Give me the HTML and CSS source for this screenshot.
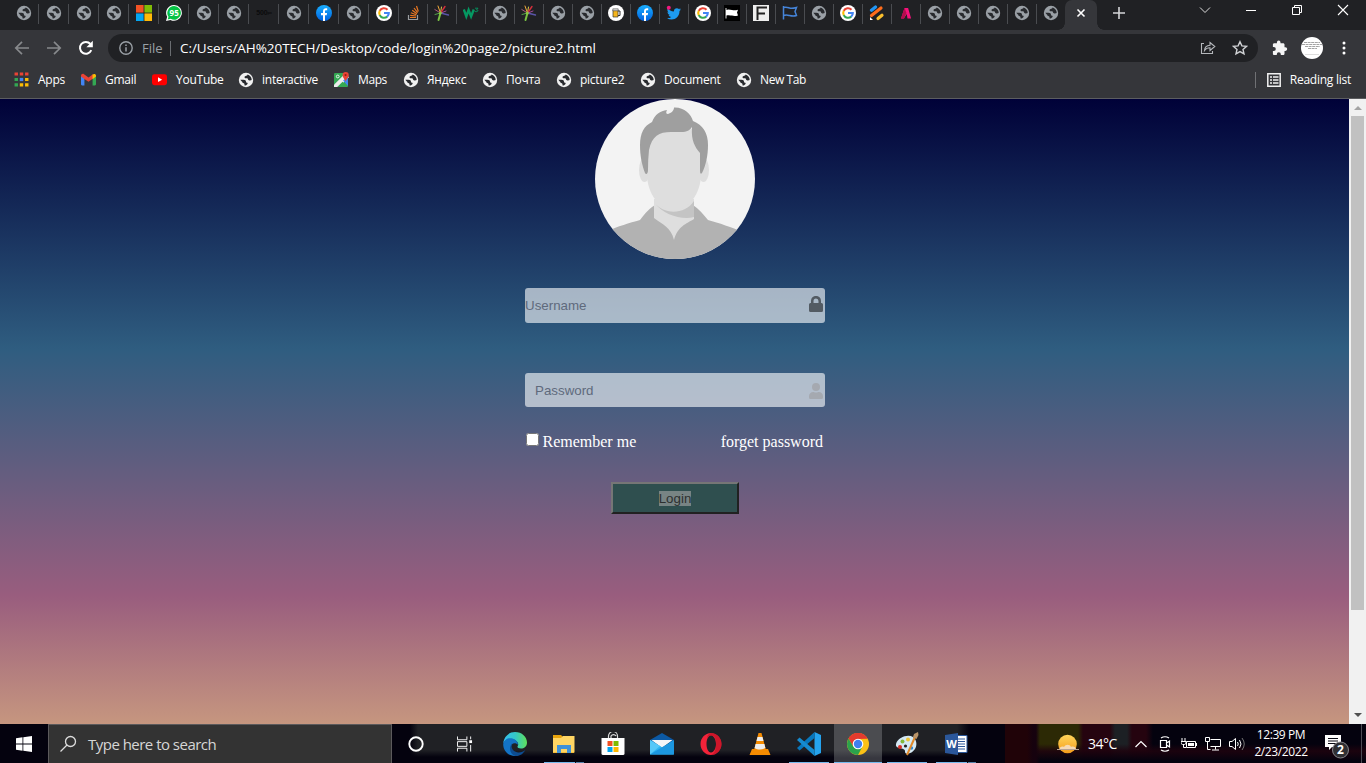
FILE: index.html
```html
<!DOCTYPE html>
<html lang="en">
<head>
<meta charset="utf-8">
<title>picture2</title>
<link rel="stylesheet" href="styles.css">
</head>
<body>
<svg class="defs" aria-hidden="true">
  <defs>
    <linearGradient id="gEdge" x1="0" y1="0" x2="1" y2="0"><stop offset="0" stop-color="#35c1f1"/><stop offset=".5" stop-color="#34c6c8"/><stop offset="1" stop-color="#5fe05a"/></linearGradient>
    <linearGradient id="gFb" x1="0" y1="0" x2="0" y2="1"><stop offset="0" stop-color="#19afff"/><stop offset="1" stop-color="#0062e0"/></linearGradient>
    <linearGradient id="gSun" x1="0" y1="0" x2="0" y2="1"><stop offset="0" stop-color="#ffd55a"/><stop offset="1" stop-color="#f59d1c"/></linearGradient>
    <symbol id="globe" viewBox="0 0 16 16"><circle cx="8" cy="8" r="7.200" fill="currentColor"/><path class="land" d="M2.300 7.800H5.500C7.300 7.800 8 8.600 8 9.700C8 10.500 8.700 10.600 9.300 10.800C9.900 11 9.700 11.700 9.300 12.200C8.700 13 7.600 13.500 6.600 13.500L6.400 12C6.200 11.300 5.600 11.300 5 11C4.300 10.600 4.500 9.900 3.800 9.500zM9.500 2.500C9.400 3.500 8.600 3.900 7.600 4C6.800 4.100 6.400 4.700 6.600 5.500C6.800 6.200 7.500 6.300 8.500 6.300C9.600 6.300 9.900 6.800 10.100 7.600C10.300 8.400 11 8.500 12 8.400L13.700 8C13.800 5.300 11.800 3.200 9.500 2.500z"/></symbol>
    <symbol id="google" viewBox="0 0 16 16"><circle cx="8" cy="8" r="8" fill="#fff"/><g fill="none" stroke-width="2.100"><path d="M11.500 4.700A4.800 4.800 0 0 0 3.700 5.900" stroke="#ea4335"/><path d="M3.800 5.700a4.800 4.800 0 0 0 0 4.600" stroke="#fbbc05"/><path d="M3.700 10.100a4.800 4.800 0 0 0 7.500 1.500" stroke="#34a853"/><path d="M8 8h4.800a4.800 4.800 0 0 1-1.700 3.700" stroke="#4285f4"/></g></symbol>
    <symbol id="fb" viewBox="0 0 16 16"><circle cx="8" cy="8" r="8" fill="url(#gFb)"/><path d="M7 16v-5.700H5V8h2V6.300C7 4.200 8.200 3.200 9.900 3.200c.7 0 1.300.1 1.300.1v2H10c-.8 0-1 .5-1 1V8h2.100l-.4 2.300H9V16z" fill="#fff"/></symbol>
    <symbol id="splash" viewBox="0 0 16 16"><g fill="none" stroke-linecap="round"><path d="M6.500 8L4 1" stroke="#f2a93b"/><path d="M6.500 8L.8 4.500" stroke="#ac5a80"/><path d="M6.500 8L7.500 2" stroke="#d8c848"/><path d="M6.500 8L11 1.500" stroke="#d52f3c" stroke-width="1.400"/><path d="M6.500 8L1 9.500" stroke="#54a548"/><path d="M6.500 8l-2 7" stroke="#7ac143" stroke-width="2"/><path d="M6.500 8l8 2" stroke="#5a55a8" stroke-width="1.300"/><path d="M7 8l5-2" stroke="#a54b9a"/></g><circle cx="6.300" cy="8" r="1.500" fill="#8cc63f"/></symbol>
  </defs>
</svg>

<div class="screen">
  <header class="tabstrip">
    <div class="tab"><svg class="fav"><use href="#globe"/></svg></div>
    <div class="tab"><svg class="fav"><use href="#globe"/></svg></div>
    <div class="tab"><svg class="fav"><use href="#globe"/></svg></div>
    <div class="tab"><svg class="fav"><use href="#globe"/></svg></div>
    <div class="tab"><svg class="fav" viewBox="0 0 16 16"><path d="M0 0h7.600v7.600H0z" fill="#f35325"/><path d="M8.400 0H16v7.600H8.400z" fill="#81bc06"/><path d="M0 8.400h7.600V16H0z" fill="#05a6f0"/><path d="M8.400 8.400H16V16H8.400z" fill="#ffba08"/></svg></div>
    <div class="tab"><svg class="fav" viewBox="0 0 16 16"><path d="M8.200 0a7.900 7.900 0 1 1-3.700 15L0 16l1.200-4.200A7.900 7.900 0 0 1 8.200 0z" fill="#fff"/><path d="M8.200 1.100a6.800 6.800 0 1 1-3.500 12.700l-3 .8.800-2.900A6.800 6.800 0 0 1 8.200 1.100z" fill="#06c244"/><text x="8.200" y="10.800" class="wa-count">95</text></svg></div>
    <div class="tab"><svg class="fav"><use href="#globe"/></svg></div>
    <div class="tab"><svg class="fav"><use href="#globe"/></svg></div>
    <div class="tab"><span class="px500">500<small>px</small></span></div>
    <div class="tab"><svg class="fav"><use href="#globe"/></svg></div>
    <div class="tab"><svg class="fav"><use href="#fb"/></svg></div>
    <div class="tab"><svg class="fav"><use href="#globe"/></svg></div>
    <div class="tab"><svg class="fav"><use href="#google"/></svg></div>
    <div class="tab narrow"><svg class="fav" viewBox="0 0 16 16" fill="none"><path d="M3.500 10v4.500h9V10" stroke="#9a9da0" stroke-width="1.200"/><path d="M5 12.500h6M5.200 10.300l5.900.7M5.800 7.800l5.600 1.900M7.200 5.300l4.800 3.400M9 3l3.600 4.700M11.500 1l1.800 5.500" stroke="#e87722" stroke-width="1.200"/></svg></div>
    <div class="tab narrow"><svg class="fav"><use href="#splash"/></svg></div>
    <div class="tab narrow"><svg class="fav" viewBox="0 0 16 16" fill="none" stroke="#059862"><path d="M.8 4.500l2.500 7L5.600 5l2.500 6.500 2.700-7" stroke-width="2.400"/><path d="M12 3.200h3l-1.500 1.700c2.500 0 1.500 2.500-1.700 1.600" stroke-width=".9"/></svg></div>
    <div class="tab narrow"><svg class="fav"><use href="#globe"/></svg></div>
    <div class="tab narrow"><svg class="fav"><use href="#splash"/></svg></div>
    <div class="tab narrow"><svg class="fav"><use href="#globe"/></svg></div>
    <div class="tab narrow"><svg class="fav"><use href="#globe"/></svg></div>
    <div class="tab narrow"><svg class="fav" viewBox="0 0 16 16"><circle cx="8" cy="8" r="8" fill="#fff"/><path d="M10 6h2v4.500h-2" fill="none" stroke="#333"/><path d="M5 5h5v7H5z" fill="#f5b51c" stroke="#333" stroke-width=".7"/><path d="M4.800 3.800h5.400v2H4.800z" fill="#ddd" stroke="#333" stroke-width=".5"/></svg></div>
    <div class="tab narrow"><svg class="fav"><use href="#fb"/></svg></div>
    <div class="tab narrow"><svg class="fav" viewBox="0 0 16 16"><path d="M15 4.200c-.5.300-1 .4-1.500.5.500-.3.900-.8 1.100-1.400-.5.300-1.100.5-1.700.7a3 3 0 0 0-5 2.500C5.200 6.400 3.200 5.200 1.800 3.500c-.8 1.500-.3 3.200 1 4-.5 0-1-.2-1.300-.4 0 1.500 1 2.600 2.300 2.900-.4.100-.9.100-1.200 0 .4 1.200 1.400 1.900 2.700 2C4 12.800 2.700 13.300 1 13.200c5.500 3.300 12.500.2 12.500-7.200.6-.4 1.100-1 1.500-1.800z" fill="#1d9bf0"/><circle cx="2.800" cy="2.800" r="2" fill="#f5187e"/></svg></div>
    <div class="tab narrow"><svg class="fav"><use href="#google"/></svg></div>
    <div class="tab narrow"><svg class="fav" viewBox="0 0 16 16"><rect width="16" height="16" fill="#000"/><path d="M2 3v10.500" stroke="#ddd"/><path d="M2 5c2.500-1.200 4-.3 6 0s3.500.3 6-.3l-1 2.700 1 3c-2.500.8-4.500.5-6 .2s-3.500-.8-6 0z" fill="#fff"/></svg></div>
    <div class="tab narrow"><svg class="fav" viewBox="0 0 16 16"><rect width="16" height="16" fill="#eee"/><path d="M4.500 15V2.500H14M4.500 8.500H12" fill="none" stroke="#222" stroke-width="2"/></svg></div>
    <div class="tab narrow"><svg class="fav" viewBox="0 0 16 16" fill="none" stroke="#4584d8" stroke-width="1.500"><path d="M1.500 1v13.500M1.500 2.500c3-1 4.500 0 6 .5s3.500.5 7-.5l-1.500 4 1.500 4c-3 1-5 .5-7 0s-3.500-1-6 0"/></svg></div>
    <div class="tab narrow"><svg class="fav"><use href="#globe"/></svg></div>
    <div class="tab narrow"><svg class="fav"><use href="#google"/></svg></div>
    <div class="tab narrow"><svg class="fav" viewBox="0 0 16 16" stroke-width="3.200" stroke-linecap="round"><path d="M2.500 5.300l4-3.300" stroke="#2196f3"/><path d="M2.500 10.500L12 3" stroke="#ff6d1c"/><path d="M9 13.500l4-3.300" stroke="#fbc02d"/><path d="M1 12v3h3z" stroke="none" fill="#fff"/></svg></div>
    <div class="tab narrow"><svg class="fav" viewBox="0 0 16 16"><path d="M6.500 3h3.600l3 10.500H9.500L8.700 9 6 13.500H3z" fill="#f5127b"/><path d="M6.500 3L3 13.500h3L8.500 8z" fill="#b30c4c"/></svg></div>
    <div class="tab narrow"><svg class="fav"><use href="#globe"/></svg></div>
    <div class="tab narrow"><svg class="fav"><use href="#globe"/></svg></div>
    <div class="tab narrow"><svg class="fav"><use href="#globe"/></svg></div>
    <div class="tab narrow"><svg class="fav"><use href="#globe"/></svg></div>
    <div class="tab narrow last"><svg class="fav"><use href="#globe"/></svg></div>
    <div class="tab-active"><svg width="10" height="10" viewBox="0 0 10 10"><path d="M1.500 1.500l7 7M8.500 1.500l-7 7" stroke="#fff" stroke-width="1.600"/></svg></div>
    <svg class="new-tab" viewBox="0 0 12 12"><path d="M6 0v12M0 6h12" stroke="#d4d5d7" stroke-width="1.600"/></svg>
    <div class="win-controls">
      <svg width="12" height="20" viewBox="0 0 12 20"><path d="M1 7.500l5 5 5-5" fill="none" stroke="#ddd"/></svg>
      <svg width="12" height="20" viewBox="0 0 12 20"><path d="M1 10.500h10" stroke="#fff"/></svg>
      <svg width="12" height="20" viewBox="0 0 12 20"><path d="M1.500 7.500h7v7h-7zM3.500 7.500v-2h7v7h-2" fill="none" stroke="#fff"/></svg>
      <svg width="12" height="20" viewBox="0 0 12 20"><path d="M1 5l10 10M11 5L1 15" stroke="#fff" stroke-width="1.100"/></svg>
    </div>
  </header>

  <div class="toolbar">
    <svg class="nav" viewBox="0 0 16 16"><path d="M15 8H2M8 1.800L1.800 8 8 14.200" fill="none" stroke="#87898c" stroke-width="1.700"/></svg>
    <svg class="nav" viewBox="0 0 16 16"><path d="M1 8h13M8 1.800L14.200 8 8 14.200" fill="none" stroke="#87898c" stroke-width="1.700"/></svg>
    <svg class="nav" viewBox="0 0 16 16"><path d="M13.300 10.200A5.900 5.900 0 1 1 12.400 4" fill="none" stroke="#fff" stroke-width="2"/><path d="M14.800.8v6.400H8.400z" fill="#fff"/></svg>
    <div class="omnibox">
      <svg class="info" viewBox="0 0 14 14"><circle cx="7" cy="7" r="6.200" fill="none" stroke="#9aa0a6" stroke-width="1.400"/><path d="M7 6.200v4.300M7 3.500v1.600" stroke="#9aa0a6" stroke-width="1.500"/></svg>
      <span class="scheme">File</span>
      <span class="url">C:/Users/AH%20TECH/Desktop/code/login%20page2/picture2.html</span>
      <svg class="share" viewBox="0 0 16 16"><path d="M4 3.500H1.500v10h11V11M4.500 10.500c.3-3.500 2.300-5 5.500-5.200V2.500l4.800 4-4.800 4V7.800c-2.500 0-4.200.8-5.500 2.700z" fill="none" stroke="#b5b8bc" stroke-width="1.100"/></svg>
      <svg class="star" viewBox="0 0 16 16"><path d="M8 1.700l1.900 4.200 4.500.5-3.400 3 1 4.500L8 11.600l-4 2.300 1-4.500-3.400-3 4.500-.5z" fill="none" stroke="#d0d2d5" stroke-width="1.400"/></svg>
    </div>
    <svg class="puzzle" viewBox="0 0 16 16"><path d="M13.400 7.300h-.9V4.600c0-.8-.6-1.400-1.400-1.400H8.500V2.400a1.800 1.800 0 0 0-3.600 0v.8H2.300C1.500 3.200.9 3.800.9 4.600v2.500h.9a2 2 0 0 1 0 4H.9v2.600c0 .8.600 1.400 1.400 1.400h2.500v-.9a2 2 0 0 1 4 0v.9h2.300c.8 0 1.400-.6 1.400-1.400v-2.800h.9a1.800 1.800 0 0 0 0-3.600z" fill="#f5f5f5"/></svg>
    <svg class="profile" viewBox="0 0 22 22"><circle cx="11" cy="11" r="11" fill="#fff"/><path d="M3 5.500h16M1 7.500h20M4 9.500h15M7 11.500h9" stroke="#999" stroke-width=".9" stroke-dasharray="3 .6"/><path d="M4 17.500h14" stroke="#ddd"/></svg>
    <svg class="dots" viewBox="0 0 4 14"><circle cx="2" cy="2" r="1.500"/><circle cx="2" cy="7" r="1.500"/><circle cx="2" cy="12" r="1.500"/></svg>
  </div>

  <nav class="bookmarks">
    <a class="bm bm-apps"><svg viewBox="0 0 14 14"><path d="M.5.500h3.200v2.700H.5zM5.400.500h3.200v2.700H5.400zM10.300.500h3.200v2.700h-3.200z" fill="#ea4335"/><path d="M.5 5.500h3.200v3H.5zM.5 10.500h3.200v3H.5z" fill="#34a853"/><path d="M5.400 5.500h3.200v3H5.400z" fill="#4285f4"/><path d="M10.300 5.500h3.200v3h-3.200zM5.400 10.500h3.200v3H5.400zM10.300 10.500h3.200v3h-3.200z" fill="#fbbc05"/></svg><span>Apps</span></a>
    <a class="bm bm-gmail"><svg viewBox="0 0 14 14"><path d="M0 3.500L3.200 6v6.500H1A1 1 0 0 1 0 11.500z" fill="#4285f4"/><path d="M10.800 6L14 3.500v8a1 1 0 0 1-1 1h-2.200z" fill="#34a853"/><path d="M0 3.500C0 1.700 1.700 1.200 2.800 2L7 5.200 11.200 2v4L7 9.200 3.200 6.500 0 4.200z" fill="#ea4335"/><path d="M10.800 2.300c1.400-1 3.200-.5 3.200 1.200v.7l-3.200 2.500z" fill="#fbbc05"/></svg><span>Gmail</span></a>
    <a class="bm bm-youtube"><svg viewBox="0 0 14 14"><rect y="2" width="14" height="10.300" rx="2.200" fill="#f00"/><path d="M5.600 5v4.400L9.500 7.200z" fill="#fff"/></svg><span>YouTube</span></a>
    <a class="bm bm-interactive"><svg class="light"><use href="#globe"/></svg><span>interactive</span></a>
    <a class="bm bm-maps"><svg viewBox="0 0 14 14"><rect y="1" width="13" height="13" rx="1" fill="#34a853"/><path d="M0 12L10.500 1.500 14 5 4.500 14H0z" fill="#ececec"/><path d="M3 14l5-5 5 5z" fill="#34a853"/><path d="M8.500 8L13 4v9z" fill="#4285f4"/><path d="M10.800 9C10 6 8 5.300 8 3a2.900 2.900 0 0 1 5.800 0c0 2.300-2.200 3-3 6z" fill="#ea4335"/><circle cx="10.800" cy="2.900" r="1" fill="#951f17"/><circle cx="3.500" cy="4.200" r="1.300" fill="none" stroke="#fff" stroke-width=".8"/></svg><span>Maps</span></a>
    <a class="bm bm-yandex"><svg class="light"><use href="#globe"/></svg><span>Яндекс</span></a>
    <a class="bm bm-mail"><svg class="light"><use href="#globe"/></svg><span>Почта</span></a>
    <a class="bm bm-picture"><svg class="light"><use href="#globe"/></svg><span>picture2</span></a>
    <a class="bm bm-document"><svg class="light"><use href="#globe"/></svg><span>Document</span></a>
    <a class="bm bm-newtab"><svg class="light"><use href="#globe"/></svg><span>New Tab</span></a>
    <a class="reading"><svg viewBox="0 0 14 14"><path d="M.8.800h12.400v12.400H.8z" fill="none" stroke="#f1f1f1" stroke-width="1.500"/><path d="M3 4h2M6 4h5.500M3 7h2M6 7h5.500M3 10h2M6 10h5.500" stroke="#f1f1f1" stroke-width="1.500"/></svg><span>Reading list</span></a>
  </nav>

  <div class="viewport">
    <main class="page">
      <svg class="avatar" viewBox="0 0 160 160">
        <defs><clipPath id="round"><circle cx="80" cy="80" r="80"/></clipPath></defs>
        <g clip-path="url(#round)">
          <rect width="160" height="160" fill="#f3f3f3"/>
          <path d="M10 133C24 127 34 124 45 121C51 113 55 109 60 106H98C104 110 108 115 113 121C124 124 136 128 150 134V160H10z" fill="#b2b2b2"/>
          <path d="M59 100H99V120C91 125 83 127 79 141C76 128 67 125 59 119z" fill="#dedede"/>
          <path d="M59 103C69 117 88 121 99 118V102C90 116 68 116 59 103z" fill="#c4c4c4"/>
          <ellipse cx="49.500" cy="71" rx="5.500" ry="12" fill="#dedede"/><ellipse cx="108.500" cy="71" rx="5.500" ry="12" fill="#dedede"/>
          <path d="M52 60V35Q79 16 106 35V75C106 95 93 111 79 111S52 95 52 75z" fill="#dedede"/>
          <path d="M50 74C47 66 45 57 45 46C45 34 49 27 57 23C60 15 65 12 72 11Q70 15 73 15C76 14 79 12 79 8.500C89 8 96 15 98 22C108 26 113 34 113 46C113 56 111 66 107 74Q105 76 105 72V54C100 48 96 42 97 28C95 31 92 33 86 33H76C64 33 57 37 54 51Q53 60 53 71C53 75 51 76 50 74z" fill="#9f9f9f"/>
        </g>
      </svg>
      <form class="login">
        <div class="field user"><span>Username</span><svg class="lock" viewBox="0 0 14 16"><path d="M12.500 7H12V4.900a5 5 0 0 0-10 0V7h-.5A1.500 1.500 0 0 0 0 8.500v6A1.500 1.500 0 0 0 1.500 16h11a1.500 1.500 0 0 0 1.500-1.500v-6A1.500 1.500 0 0 0 12.500 7zm-3 0h-5V4.900a2.500 2.500 0 0 1 5 0z"/></svg></div>
        <div class="field pass"><span>Password</span><svg class="person" viewBox="0 0 14 16"><circle cx="7" cy="4" r="4"/><path d="M9.800 9h-.5c-1.500.7-3.100.7-4.600 0h-.5A4.200 4.200 0 0 0 0 13.200v1.300A1.500 1.500 0 0 0 1.500 16h11a1.500 1.500 0 0 0 1.500-1.500v-1.300A4.200 4.200 0 0 0 9.800 9z"/></svg></div>
        <div class="options"><label><input type="checkbox"> Remember me</label><span>forget password</span></div>
        <button type="button" class="submit"><span>Login</span></button>
      </form>
    </main>
    <div class="scrollbar">
      <svg viewBox="0 0 8 4"><path d="M0 4l4-4 4 4z" fill="#a3a3a3"/></svg>
      <div class="thumb"></div>
      <svg viewBox="0 0 8 4"><path d="M0 0l4 4 4-4z" fill="#505050"/></svg>
    </div>
  </div>

  <footer class="taskbar">
    <div class="start"><svg width="16" height="16" viewBox="0 0 16 16"><path d="M0 2.200L6.500 1.300V7.600H0zM7.300 1.200L16 0v7.600H7.300zM0 8.400h6.500v6.300L0 13.800zM7.300 8.400H16V16l-8.700-1.200z" fill="#fff"/></svg></div>
    <div class="search"><svg width="18" height="18" viewBox="0 0 18 18"><circle cx="11.500" cy="6.500" r="5" fill="none" stroke="#ddd" stroke-width="1.300"/><path d="M8 10l-6.500 6.500" stroke="#ddd" stroke-width="1.300"/></svg><span>Type here to search</span></div>
    <div class="apps">
      <div class="app sys"><svg width="16" height="16" viewBox="0 0 16 16"><circle cx="8" cy="8" r="6.700" fill="none" stroke="#fff" stroke-width="1.900"/></svg></div>
      <div class="app task"><svg width="17" height="16" viewBox="0 0 17 16"><path d="M.5 0v3.500h10V0M.5 16v-3.500h10V16M.5 5.500h10v5H.5zM14.500 0v3M14.500 9v7" fill="none" stroke="#fff"/><path d="M13 4h3v3h-3z" fill="#fff"/></svg></div>
      <div class="app"><svg viewBox="0 0 24 24"><path d="M.3 11C1 4.500 6 0 12 0c7 0 12 5 12 10.500 0 4-3 6-6 6-2.500 0-3.800-1-3.500-2 1-1.500 1-3-.2-4.500C11 6 4 6 .3 11z" fill="url(#gEdge)"/><path d="M.2 12C1 6.800 6 5.500 9.500 6.500c4 1.200 5.800 4.500 5.300 6.200C11 9 7 12.500 8 17c.8 3.500 4 6 7.500 6.300C7.500 26 0 20 .2 12z" fill="#1373c5"/><path d="M9.500 11c-2.500 4 .5 9.500 6 9.500 3 0 5-1 6.800-2.500C20 22.500 16 24 13 24c-5-.5-8.500-8-3.500-13z" fill="#0d4c91"/></svg></div>
      <div class="app open multi"><svg viewBox="0 0 24 24"><path d="M1 3h8l2 2h11v16H1z" fill="#e8a30c"/><path d="M1 6h8l2-2h11.500v16.500H1z" fill="#ffd563"/><path d="M5 21v-8h14v8h-4v-4H9v4z" fill="#3f91d8"/></svg></div>
      <div class="app"><svg viewBox="0 0 24 24"><path d="M7.500 7V4a4.500 4.500 0 0 1 9 0v3M10 7V4a3 3 0 0 1 5 0" fill="none" stroke="#ddd" stroke-width="1.200"/><path d="M.5 6h23v15.500a1.500 1.500 0 0 1-1.500 1.500H2A1.500 1.500 0 0 1 .5 21.500z" fill="#fff"/><path d="M6.500 9h5v5h-5z" fill="#f25022"/><path d="M12.500 9h5v5h-5z" fill="#7fba00"/><path d="M6.500 15h5v5h-5z" fill="#00a4ef"/><path d="M12.500 15h5v5h-5z" fill="#ffb900"/></svg></div>
      <div class="app"><svg viewBox="0 0 24 24"><path d="M0 8l12-7 12 7-2 3H2z" fill="#0c59a4"/><path d="M1.500 8h21L12 16z" fill="#f4f6f8"/><path d="M0 8l24 14.500H0z" fill="#2eb5f2"/><path d="M24 8L0 22.500h24z" fill="#1c97e0"/><path d="M0 8l10 6L0 22.500z" fill="#56c8f8"/></svg></div>
      <div class="app"><svg viewBox="0 0 24 24"><path fill-rule="evenodd" d="M12 1c6 0 10.500 5 10.500 11S18 23 12 23 1.500 18 1.500 12 6 1 12 1zm0 2.500C9 3.500 7.500 8 7.500 12s1.500 8.500 4.500 8.500 5-4.500 5-8.500-2-8.500-5-8.500z" fill="#f32339"/><path d="M12 1c6 0 10.500 5 10.500 11S18 23 12 23c4-1.500 5-6 5-11S15.500 3.500 12 3.500C10.500 3.500 9 4.500 8 6.500 8 4 9.500 1.500 12 1z" fill="#b70d22" opacity=".6"/></svg></div>
      <div class="app"><svg viewBox="0 0 24 24"><path d="M4 17h16l2.500 6h-21z" fill="#f58b00"/><path d="M10.500 1h3L18 18c-2 2.500-10 2.500-12 0z" fill="#f58b00"/><path d="M9.500 5h5l1 4h-7zM7.600 12h8.800l1 4c-3 2-7.800 2-10.800 0z" fill="#eee"/></svg></div>
      <div class="app open"><svg viewBox="0 0 24 24"><path d="M17.500 0L24 3v18l-6.500 3z" fill="#25a3ee"/><path d="M17.500 0v6L2.500 18.500 0 16z" fill="#0877bd"/><path d="M0 8l2.500-2.500L17.500 18v6z" fill="#168bd0"/></svg></div>
      <div class="app open active"><svg viewBox="0 0 24 24"><circle cx="12" cy="12" r="11" fill="#fbc116"/><path d="M2.500 6.500A11 11 0 0 1 21.500 6.500L12 7l-4.800 7.700z" fill="#e33b2e"/><path d="M2.500 6.500A11 11 0 0 0 12 23l4.500-8.500H7.200z" fill="#2ba24c"/><path d="M2.500 6.500A11 11 0 0 1 21.500 6.500z" fill="#e33b2e"/><circle cx="12" cy="12" r="5.300" fill="#fff"/><circle cx="12" cy="12" r="4.200" fill="#3f7ff0"/></svg></div>
      <div class="app open"><svg viewBox="0 0 24 24"><path d="M1 12C3 5 13 2 18 5c3 2 4.500 7 2.500 11-2 4-6.500 6.500-9.500 5.500-2-1 0-3-2-4-3-2-9-1-8-5.500z" fill="#d4e9f4"/><circle cx="5" cy="15" r="2" fill="#d92f26"/><circle cx="7.500" cy="9.500" r="2" fill="#83b93b"/><circle cx="13" cy="7.500" r="2" fill="#eec637"/><circle cx="10.500" cy="14" r="1.600" fill="#222"/><circle cx="16.500" cy="16" r="1.700" fill="#2d8ad8"/><path d="M20 5L12 23" stroke="#e08a2c" stroke-width="2"/><path d="M18 5l1-3 4-2 .5 3-2 4z" fill="#b99469"/></svg></div>
      <div class="app open multi"><svg viewBox="0 0 24 24"><path d="M12 3.500h11v17H12z" fill="#fff" stroke="#2b579a"/><path d="M14 7h7M14 9.500h7M14 12h7M14 14.500h7M14 17h7" stroke="#2b579a"/><path d="M1 3l13-2v22L1 21z" fill="#2b579a"/><text x="7.500" y="16" class="word-letter">W</text></svg></div>
    </div>
    <div class="tray">
      <svg width="22" height="20" viewBox="0 0 22 20"><circle cx="10.500" cy="10" r="9.300" fill="url(#gSun)"/><path d="M2.500 15.500c0-3 3-3.500 4.500-2.500 1.500-3 6-3 7 0 2-1 5 0 5 2.500z" fill="#f6d9b4"/><path d="M0 15.500h22" stroke="#b7a293"/></svg>
      <span class="temp">34°C</span>
      <svg class="chev" viewBox="0 0 12 8"><path d="M.5 7L6 1.500 11.500 7" fill="none" stroke="#fff" stroke-width="1.200"/></svg>
      <svg class="meet" viewBox="0 0 12 16"><path d="M1.500 4.500h6v7h-6zM7.500 7l3-2v6l-3-2M2 2Q6-.5 10 2M2 14q4 2.500 8 0" fill="none" stroke="#fff" stroke-width="1.200"/></svg>
      <svg class="batt" viewBox="0 0 16 12"><path d="M5.500 3.500h9v6h-9z" fill="none" stroke="#fff"/><path d="M7 5h6v3H7zM15 5h1v3h-1z" fill="#fff"/><path d="M1 0v3M4 0v3M0 3.500h5v2l-1.500 1h-2L0 5.500zM2.500 6.500v3H5" stroke="#fff" fill="none"/></svg>
      <svg class="net" viewBox="0 0 16 14"><path d="M5.500 2.500h10v7h-10M10.500 9.500v3M7 13h7M.5.500h4v4h-4zM2.500 4.500v8h3" fill="none" stroke="#fff"/></svg>
      <svg class="vol" viewBox="0 0 16 14"><path d="M.5 4.500h2.500L6.500 1.500v11L3 9.500H.5z" fill="none" stroke="#fff"/><path d="M8.500 5q1.500 2 0 4M10.500 3q3 4 0 8" fill="none" stroke="#fff"/><path d="M13 1q4.500 6 0 12" fill="none" stroke="#777"/></svg>
      <div class="clock"><span>12:39 PM</span><span>2/23/2022</span></div>
      <svg class="notice" viewBox="0 0 24 26"><path d="M0 2h16v12H7l-3 3v-3H0z" fill="#fff"/><path d="M3 5.500h10M3 8h10M3 10.500h10" stroke="#080812"/><circle cx="15.500" cy="17" r="8" fill="#303034" stroke="#85858a"/><text x="15.500" y="21" class="notice-count">2</text></svg>
      <div class="peek"></div>
    </div>
  </footer>
</div>
</body>
</html>
```

FILE: styles.css
```css
* { box-sizing: border-box; }
body { margin: 0; overflow: hidden; font-family: "Open Sans", "Noto Sans", sans-serif; background: #202124; }
svg { display: block; flex: none; }
.defs { position: absolute; width: 0; height: 0; }
.screen { width: 1366px; height: 763px; display: flex; flex-direction: column; overflow: hidden; }

/* Tab strip */
.tabstrip { height: 30px; flex: none; display: flex; background: #202124; padding-left: 9px; }
.tab { position: relative; width: 30px; height: 26px; flex: none; display: flex; align-items: center; justify-content: center; color: #9aa0a6; }
.tab.narrow { width: 29px; padding-right: 1px; }
.tab::after { content: ""; position: absolute; right: 0; top: 4px; width: 1px; height: 20px; background: #4a4c50; }
.tab.last::after { display: none; }
.fav { width: 16px; height: 16px; }
.land { fill: #282a2e; }
.light .land { fill: #35363a; }
.wa-count { font: 700 8px "Open Sans", sans-serif; fill: #fff; text-anchor: middle; }
.px500 { font: 700 7px/16px "Liberation Sans", sans-serif; color: #0b0b0c; letter-spacing: -.2px; }
.px500 small { font-size: 4px; vertical-align: 1px; }
.tab-active { position: relative; width: 32px; height: 30px; margin-left: -1px; display: flex; align-items: center; justify-content: center; padding-bottom: 4px; background: #35363a; border-radius: 7px 7px 0 0; }
.tab-active::before, .tab-active::after { content: ""; position: absolute; bottom: 0; width: 7px; height: 7px; }
.tab-active::before { left: -7px; background: radial-gradient(circle at 0 0, transparent 6.500px, #35363a 7px); }
.tab-active::after { right: -7px; background: radial-gradient(circle at 100% 0, transparent 6.500px, #35363a 7px); }
.new-tab { width: 12px; height: 12px; margin: 7px 0 0 16px; }
.win-controls { display: flex; gap: 34px; margin: 0 17px 0 auto; }

/* Address bar */
.toolbar { height: 36px; flex: none; display: flex; align-items: center; background: #35363a; padding: 0 20px 0 14px; }
.nav { width: 16px; height: 16px; margin-right: 16px; }
.omnibox { width: 1150px; height: 28px; margin-left: -2px; border-radius: 14px; background: #202124; display: flex; align-items: center; padding: 0 10px 0 11px; font-size: 13px; }
.info { width: 14px; height: 14px; }
.scheme { width: 29px; margin-left: 9px; line-height: 15px; color: #9aa0a6; border-right: 1px solid #6a6d71; white-space: nowrap; }
.url { margin-left: 9px; color: #fff; font-size: 13.500px; letter-spacing: -.05px; white-space: nowrap; }
.share { width: 16px; height: 16px; margin-left: auto; }
.star { width: 16px; height: 16px; margin-left: 16px; }
.puzzle { width: 16px; height: 16px; margin-left: 14px; }
.profile { width: 22px; height: 22px; margin-left: 13px; }
.dots { width: 4px; height: 14px; margin-left: auto; fill: #fff; }

/* Bookmarks */
.bookmarks { height: 33px; flex: none; display: flex; align-items: center; background: #35363a; border-bottom: 1px solid #5c5d60; padding: 0 15px 5px 14px; font-size: 12px; color: #fff; }
.bm { display: flex; align-items: center; flex: none; white-space: nowrap; gap: 9px; letter-spacing: -.25px; }
.bm svg { width: 15px; height: 15px; }
.bm svg.light { width: 16px; height: 16px; margin-right: -1px; }
.light { color: #f1f1f1; }
.bm-apps { width: 67px; }
.bm-gmail { width: 71px; }
.bm-youtube { width: 86px; }
.bm-interactive { width: 96px; }
.bm-maps { width: 69px; letter-spacing: -.4px; }
.bm-yandex { width: 79px; }
.bm-mail { width: 74px; }
.bm-picture { width: 84px; }
.bm-document { width: 96px; }
.bm-newtab { letter-spacing: -.4px; }
.reading { display: flex; align-items: center; gap: 9px; margin-left: auto; padding-left: 11px; border-left: 1px solid #707174; letter-spacing: -.25px; line-height: 16px; }
.reading svg { width: 14px; height: 14px; }

/* Login page */
.viewport { height: 625px; flex: none; display: flex; }
.page { width: 1349px; display: flex; flex-direction: column; align-items: center; background: linear-gradient(#000138, #2f5d80 40%, #995d7e 79.500%, #c6967f); }
.avatar { width: 160px; height: 160px; margin-left: 1px; }
.login { width: 300px; margin: 29px 0 0 1px; display: flex; flex-direction: column; }
.field { display: flex; align-items: center; justify-content: space-between; background: rgba(255, 255, 255, .6); border-radius: 3px; font: 13.333px "Liberation Sans", Arial, sans-serif; color: #5f6a7c; }
.user { height: 35px; padding-right: 2px; }
.pass { height: 34px; margin-top: 50px; padding: 0 2px 0 10px; }
.lock { width: 14px; height: 16px; fill: #535b63; margin-bottom: 3px; }
.person { width: 14px; height: 16px; fill: #a5a9b0; margin-top: 2px; }
.options { display: flex; justify-content: space-between; margin-top: 25px; padding-right: 2px; font: 16px/20px "Liberation Serif", "Times New Roman", serif; color: #fff; }
.options label { display: flex; gap: 3.500px; white-space: nowrap; }
.options input { width: 13px; height: 13px; margin: 1px 0 0 1px; }
.submit { width: 128px; height: 32px; align-self: center; margin: 30px 0 0; padding: 1px 0 0; background: #2f4f4f; border: 2px solid; border-color: #767676 #212121 #212121 #767676; font: 13.333px/16px "Liberation Sans", Arial, sans-serif; color: #2d3030; }
.submit span { background: #788484; }
.scrollbar { width: 17px; background: #f1f1f1; display: flex; flex-direction: column; align-items: center; padding: 7px 0; }
.scrollbar svg { width: 8px; height: 4px; }
.thumb { width: 13px; height: 494px; margin: 6px 0 auto; background: #c1c1c1; }

/* Taskbar */
.taskbar { height: 39px; flex: none; display: flex; color: #fff; background: #04020e; }
.start { width: 48px; display: flex; align-items: center; justify-content: center; }
.search { width: 344px; display: flex; align-items: center; background: #333; border: 1px solid #5c5a5c; border-bottom: 0; padding-left: 10px; gap: 11px; font-size: 15px; letter-spacing: -.52px; color: #d6d6d6; }
.apps { width: 613px; display: flex; gap: 1px; background: linear-gradient(90deg, #04020e 18px, transparent 26px, transparent 565px, #04020e 577px), linear-gradient(#202125 26px, #04020e 33px); }
.app { position: relative; width: 48px; display: flex; align-items: center; justify-content: center; }
.app svg { width: 24px; height: 24px; }
.app.sys svg, .app.task svg { width: 16px; height: 16px; }
.app.task { margin-right: 1px; }
.app.open::after { content: ""; position: absolute; left: 4px; right: 4px; bottom: 0; height: 1px; background: #76b9ed; }
.app.multi::after { background: linear-gradient(90deg, #76b9ed 31px, #111 31px, #111 32px, #5282aa 32px); }
.app.active { background: linear-gradient(#4b4c50 26px, #37373f 34px); }
.app.active::after { left: 0; right: 0; }
.word-letter { font: 700 11px "Open Sans", sans-serif; fill: #fff; text-anchor: middle; }
.tray { flex: 1; display: flex; align-items: center; padding-left: 52px; background: linear-gradient(90deg, #200308 22px, #16020e 28px, #16020e 31px, transparent 35px), linear-gradient(transparent 20px, rgba(30, 3, 14, .9) 27px, #04020e 37px), linear-gradient(90deg, #2c2905 73px, #25040f 78px 105px, #1c2024 110px 122px, #25040f 127px 141px, #04020e 148px); }
.temp { width: 35px; margin-left: 9px; font-size: 14px; letter-spacing: -.5px; white-space: nowrap; }
.chev { width: 12px; height: 8px; margin-left: 12px; }
.meet { width: 12px; height: 16px; margin-left: 12px; }
.batt { width: 16px; height: 12px; margin-left: 10px; }
.net { width: 16px; height: 14px; margin-left: 8px; }
.vol { width: 16px; height: 14px; margin-left: 8px; }
.clock { width: 64px; margin-left: 4px; display: flex; flex-direction: column; align-items: center; font-size: 12px; line-height: 17.500px; letter-spacing: -.4px; white-space: nowrap; padding-bottom: 1px; }
.notice { width: 24px; height: 26px; margin: 5px 0 0 12px; }
.notice-count { font: 700 12px "Open Sans", sans-serif; fill: #fff; text-anchor: middle; }
.peek { width: 5px; height: 39px; margin-left: auto; border-left: 1px solid #4d4b54; }
```
